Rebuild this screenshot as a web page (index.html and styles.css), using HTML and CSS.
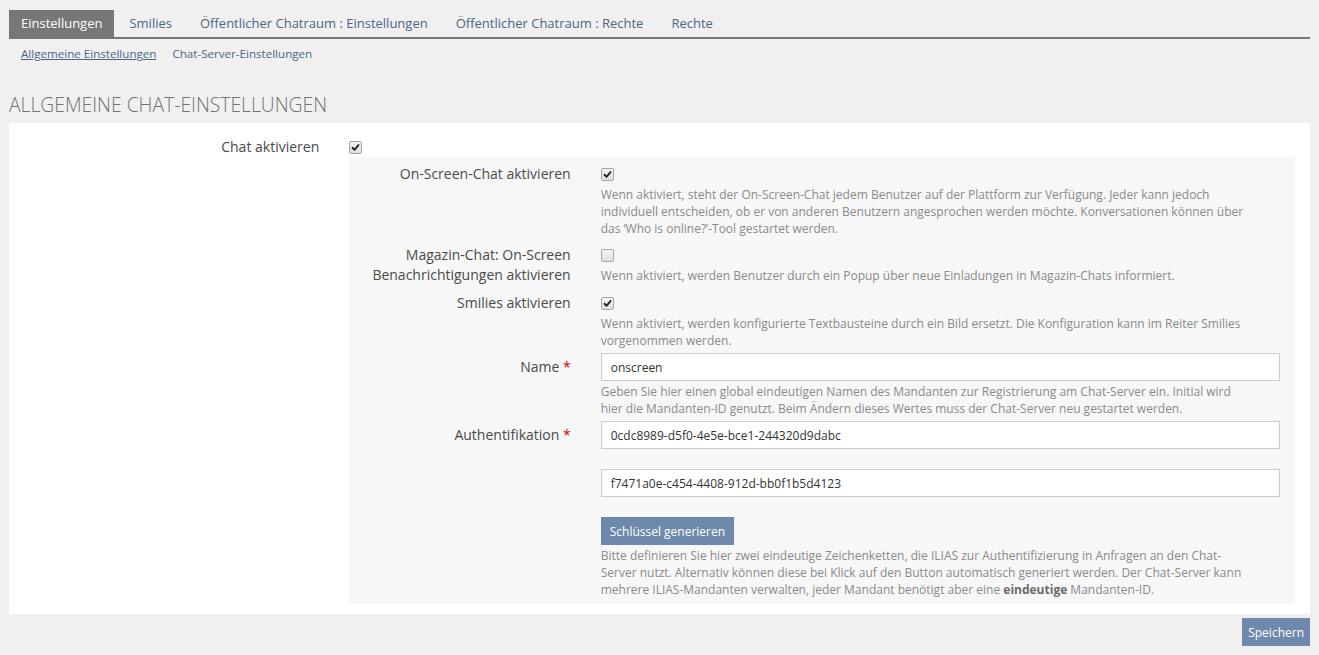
FILE: index.html
```html
<!DOCTYPE html>
<html lang="de">
<head>
<meta charset="utf-8">
<title>Chat Einstellungen</title>
<link rel="stylesheet" href="styles.css">
</head>
<body>
<div class="page">
  <nav class="tabs">
    <a class="tab active">Einstellungen</a>
    <a class="tab">Smilies</a>
    <a class="tab">Öffentlicher Chatraum : Einstellungen</a>
    <a class="tab">Öffentlicher Chatraum : Rechte</a>
    <a class="tab">Rechte</a>
  </nav>
  <nav class="subtabs">
    <a class="subtab current">Allgemeine Einstellungen</a>
    <a class="subtab">Chat-Server-Einstellungen</a>
  </nav>
  <h1 class="heading">ALLGEMEINE CHAT-EINSTELLUNGEN</h1>

  <form class="panel">
    <div class="row">
      <div class="label">Chat aktivieren</div>
      <div class="control">
        <div class="check-line"><span class="checkbox checked"><svg viewBox="0 0 13 13"><path d="M3 6.8 L5.3 9.2 L10 3.6" /></svg></span></div>
        <div class="subform">
          <div class="row srow">
            <div class="label">On-Screen-Chat aktivieren</div>
            <div class="control">
              <div class="check-line"><span class="checkbox checked"><svg viewBox="0 0 13 13"><path d="M3 6.8 L5.3 9.2 L10 3.6" /></svg></span></div>
              <p class="help">Wenn aktiviert, steht der On-Screen-Chat jedem Benutzer auf der Plattform zur Verfügung. Jeder kann jedoch<br>individuell entscheiden, ob er von anderen Benutzern angesprochen werden möchte. Konversationen können über<br>das ‘Who is online?’-Tool gestartet werden.</p>
            </div>
          </div>
          <div class="row srow">
            <div class="label">Magazin-Chat: On-Screen Benachrichtigungen aktivieren</div>
            <div class="control">
              <div class="check-line"><span class="checkbox"></span></div>
              <p class="help">Wenn aktiviert, werden Benutzer durch ein Popup über neue Einladungen in Magazin-Chats informiert.</p>
            </div>
          </div>
          <div class="row srow">
            <div class="label">Smilies aktivieren</div>
            <div class="control">
              <div class="check-line"><span class="checkbox checked"><svg viewBox="0 0 13 13"><path d="M3 6.8 L5.3 9.2 L10 3.6" /></svg></span></div>
              <p class="help">Wenn aktiviert, werden konfigurierte Textbausteine durch ein Bild ersetzt. Die Konfiguration kann im Reiter Smilies<br>vorgenommen werden.</p>
            </div>
          </div>
          <div class="row srow">
            <div class="label">Name <span class="req">*</span></div>
            <div class="control">
              <input class="text-input" type="text" value="onscreen">
              <p class="help">Geben Sie hier einen global eindeutigen Namen des Mandanten zur Registrierung am Chat-Server ein. Initial wird<br>hier die Mandanten-ID genutzt. Beim Ändern dieses Wertes muss der Chat-Server neu gestartet werden.</p>
            </div>
          </div>
          <div class="row srow">
            <div class="label">Authentifikation <span class="req">*</span></div>
            <div class="control">
              <input class="text-input" type="text" value="0cdc8989-d5f0-4e5e-bce1-244320d9dabc">
              <input class="text-input spaced" type="text" value="f7471a0e-c454-4408-912d-bb0f1b5d4123">
              <button type="button" class="btn spaced">Schlüssel generieren</button>
              <p class="help">Bitte definieren Sie hier zwei eindeutige Zeichenketten, die ILIAS zur Authentifizierung in Anfragen an den Chat-<br>Server nutzt. Alternativ können diese bei Klick auf den Button automatisch generiert werden. Der Chat-Server kann<br>mehrere ILIAS-Mandanten verwalten, jeder Mandant benötigt aber eine <strong>eindeutige</strong> Mandanten-ID.</p>
            </div>
          </div>
        </div>
      </div>
    </div>
  </form>
  <div class="actions">
    <button type="button" class="btn btn-save">Speichern</button>
  </div>
</div>
</body>
</html>
```

FILE: styles.css
```css
* { box-sizing: border-box; }

body {
  margin: 0;
  background: #f0f0f0;
  font-family: "Open Sans", "Liberation Sans", sans-serif;
  color: #4a4a4a;
}

.page {
  padding: 10px 9px 0;
}

.tabs {
  display: flex;
  border-bottom: 2px solid #777777;
}

.tab {
  height: 27px;
  line-height: 27px;
  padding: 0 12px;
  margin-right: 4px;
  font-size: 13px;
  color: #4c6586;
  cursor: pointer;
}

.tab.active {
  background: #777777;
  color: #ffffff;
  margin-right: 3px;
}

.subtabs {
  display: flex;
  gap: 16px;
  padding: 6px 12px 0;
  font-size: 11.6px;
  line-height: 17px;
}

.subtab {
  color: #4c6586;
}

.subtab.current {
  text-decoration: underline;
}

.heading {
  margin: 30px 0 5px;
  font-size: 19.3px;
  line-height: 26px;
  font-weight: 300;
  color: #737373;
}

.panel {
  background: #ffffff;
  padding: 10px 0;
  margin: 0;
}

.row {
  display: grid;
  grid-template-columns: 25% 75%;
}

.label {
  padding: 4px 15px 0;
  text-align: right;
  font-size: 14px;
  line-height: 20px;
  color: #4a4a4a;
}

.req {
  color: #d40000;
}

.control {
  padding: 0 15px;
  min-width: 0;
}

.check-line {
  height: 24px;
  padding-top: 4px;
  display: flex;
  align-items: center;
}

.checkbox {
  display: inline-block;
  width: 13px;
  height: 13px;
  border: 1px solid #a6a6a6;
  border-radius: 2px;
  background: linear-gradient(#f4f4f4, #dedede);
}

.checkbox svg {
  display: block;
  width: 11px;
  height: 11px;
}

.checkbox svg path {
  fill: none;
  stroke: #222222;
  stroke-width: 2.2;
  stroke-linecap: round;
  stroke-linejoin: round;
}

.subform {
  background: #f7f7f7;
  padding: 3px 0 6px;
  margin-top: 0;
}

.srow + .srow {
  margin-top: 4px;
}

.help {
  margin: 2px 0 0;
  font-size: 12px;
  line-height: 17px;
  color: #8a8a8a;
  white-space: nowrap;
}

.help strong {
  color: #6a6a6a;
  font-weight: 700;
}

.text-input {
  display: block;
  width: 100%;
  height: 28px;
  border: 1px solid #cccccc;
  background: #ffffff;
  padding: 0 9px;
  font-family: "Open Sans", "Liberation Sans", sans-serif;
  font-size: 12px;
  color: #333333;
}

.spaced {
  margin-top: 20px;
}

.btn {
  display: block;
  height: 28px;
  padding: 0 9px;
  border: none;
  background: #6f89ac;
  color: #ffffff;
  font-family: "Open Sans", "Liberation Sans", sans-serif;
  font-size: 12px;
}

.btn-save {
  padding: 0 6px;
}

.actions {
  display: flex;
  justify-content: flex-end;
  padding-top: 4px;
}
```
